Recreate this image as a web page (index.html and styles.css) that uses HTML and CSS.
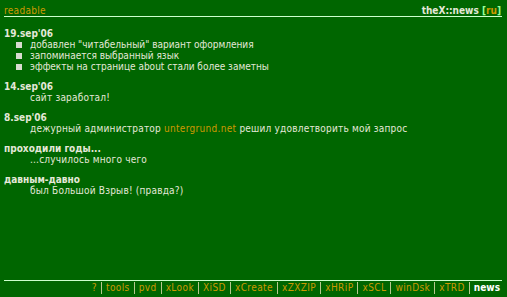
FILE: index.html
```html
<!DOCTYPE html>
<html>
<head>
<meta charset="utf-8">
<link rel="stylesheet" href="styles.css">
</head>
<body>
<div class="page">
  <div class="top">
    <a class="lnk">readable</a>
    <span class="title">theX::news <span class="br">[</span><span class="lang">ru</span><span class="br">]</span></span>
  </div>
  <div class="content">
    <div class="entry">
      <div class="date">19.sep'06</div>
      <ul class="items">
        <li>добавлен "читабельный" вариант оформления</li>
        <li>запоминается выбранный язык</li>
        <li>эффекты на странице about стали более заметны</li>
      </ul>
    </div>
    <div class="entry">
      <div class="date">14.sep'06</div>
      <div class="text">сайт заработал!</div>
    </div>
    <div class="entry">
      <div class="date">8.sep'06</div>
      <div class="text">дежурный администратор <a class="lnk">untergrund.net</a> решил удовлетворить мой запрос</div>
    </div>
    <div class="entry">
      <div class="date">проходили годы...</div>
      <div class="text">...случилось много чего</div>
    </div>
    <div class="entry">
      <div class="date">давным-давно</div>
      <div class="text">был Большой Взрыв! (правда?)</div>
    </div>
  </div>
  <div class="bottom">
    <a class="nav">?</a><a class="nav">tools</a><a class="nav">pvd</a><a class="nav">xLook</a><a class="nav">XiSD</a><a class="nav">xCreate</a><a class="nav">xZXZIP</a><a class="nav">xHRiP</a><a class="nav">xSCL</a><a class="nav">winDsk</a><a class="nav">xTRD</a><span class="nav cur">news</span>
  </div>
</div>
</body>
</html>
```

FILE: styles.css
```css
html, body {
  margin: 0;
  padding: 0;
  background: #006600;
}
body {
  font-family: "DejaVu Sans Condensed", "DejaVu Sans", sans-serif;
  font-stretch: semi-condensed;
  font-size: 10px;
  color: #e4e8d8;
  line-height: 11px;
}
.page {
  width: 507px;
  height: 297px;
  display: flex;
  flex-direction: column;
  padding: 0 5px 0 4px;
  box-sizing: border-box;
}
.top {
  display: flex;
  justify-content: space-between;
  align-items: flex-end;
  height: 15px;
  border-bottom: 1px solid #ccffcc;
  padding-top: 1px;
}
.lnk {
  color: #cc9900;
  letter-spacing: 0.3px;
}
.title {
  font-weight: bold;
  padding-right: 1px;
}
.br { color: #99ff99; }
.lang { color: #cc9900; }
.content {
  flex: 1;
  padding-top: 11px;
}
.entry {
  margin-bottom: 9px;
}
.date {
  font-weight: bold;
  height: 11px;
}
.items {
  list-style: none;
  margin: 0;
  padding: 0 0 0 12px;
}
.items li {
  display: flex;
  align-items: center;
  height: 11px;
}
.items li::before {
  content: "";
  width: 6px;
  height: 6px;
  background: #d8dcd0;
  margin-right: 8px;
}
.text {
  padding-left: 26px;
  height: 11px;
  letter-spacing: 0.2px;
}
.bottom {
  border-top: 1px solid #ccffcc;
  display: flex;
  justify-content: flex-end;
  height: 13px;
  margin-bottom: 3px;
  align-items: center;
}
.nav {
  color: #cc9900;
  padding: 0 4px;
  border-left: 1px solid #b8c890;
  line-height: 12px;
  letter-spacing: 0.4px;
}
.nav:first-child { border-left: none; }
.cur {
  color: #ffffff;
  font-weight: bold;
  letter-spacing: 0;
  padding-right: 2px;
}
```
